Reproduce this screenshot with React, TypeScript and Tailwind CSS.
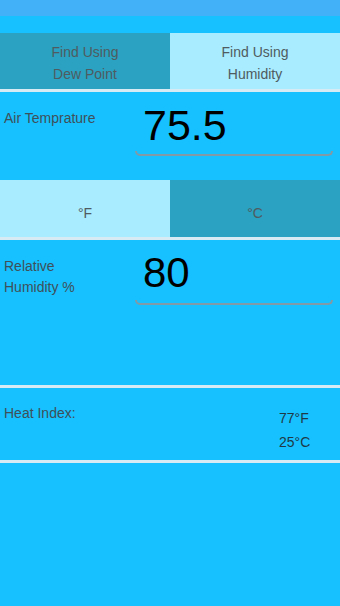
const font = { fontFamily: '"Liberation Sans", Arial, sans-serif' };

function Divider() {
  return <div className="h-[3px] bg-[#d6ebf3]" />;
}

function Underline() {
  return <div className="h-[5px] border-b-2 border-l-2 border-r-2 border-[#8299a6] rounded-b-[5px]" />;
}

export default function App() {
  return (
    <div className="w-[340px] h-[606px] bg-[#17c0ff] overflow-hidden flex flex-col" style={font}>
      {/* status bar */}
      <div className="h-[16px] bg-[#43b1f8]" />
      <div className="h-[17px]" />

      {/* mode tabs */}
      <div className="grid grid-cols-2 h-[56px] text-[14px] leading-[22px] text-[#4f5b60]">
        <div className="bg-[#2ba2c1] flex flex-col items-center justify-center pt-[3px]">
          <span>Find Using</span>
          <span>Dew Point</span>
        </div>
        <div className="bg-[#a9ecff] flex flex-col items-center justify-center pt-[3px]">
          <span>Find Using</span>
          <span>Humidity</span>
        </div>
      </div>
      <Divider />

      {/* air temperature */}
      <div className="h-[88px] flex">
        <div className="w-[135px] pl-[4px] pt-[16px] text-[14px] leading-[20px] text-[#3f5058]">Air Temprature</div>
        <div className="w-[198px] pt-[12px]">
          <div className="pl-[8px] text-[43px] leading-[43px] text-black">75.5</div>
          <div className="mt-[4px]">
            <Underline />
          </div>
        </div>
      </div>

      {/* units */}
      <div className="grid grid-cols-2 h-[57px] text-[14px] text-[#4f5b60]">
        <div className="bg-[#a9ecff] flex items-center justify-center pt-[10px]">°F</div>
        <div className="bg-[#2ba2c1] flex items-center justify-center pt-[10px]">°C</div>
      </div>
      <Divider />

      {/* humidity */}
      <div className="h-[145px] flex">
        <div className="w-[135px] pl-[4px] pt-[16px] text-[14px] leading-[21px] text-[#3f5058]">
          <div>Relative</div>
          <div>Humidity %</div>
        </div>
        <div className="w-[198px] pt-[12px]">
          <div className="pl-[8px] text-[42px] leading-[42px] text-black">80</div>
          <div className="mt-[6px]">
            <Underline />
          </div>
        </div>
      </div>
      <Divider />

      {/* heat index */}
      <div className="h-[72px] flex">
        <div className="w-[279px] pl-[4px] pt-[15px] text-[14px] leading-[20px] text-[#3f5058]">Heat Index:</div>
        <div className="pt-[18px] text-[14px] leading-[24px] text-[#1f3a46]">
          <div>77°F</div>
          <div>25°C</div>
        </div>
      </div>
      <Divider />
      <div className="flex-1" />
    </div>
  );
}
